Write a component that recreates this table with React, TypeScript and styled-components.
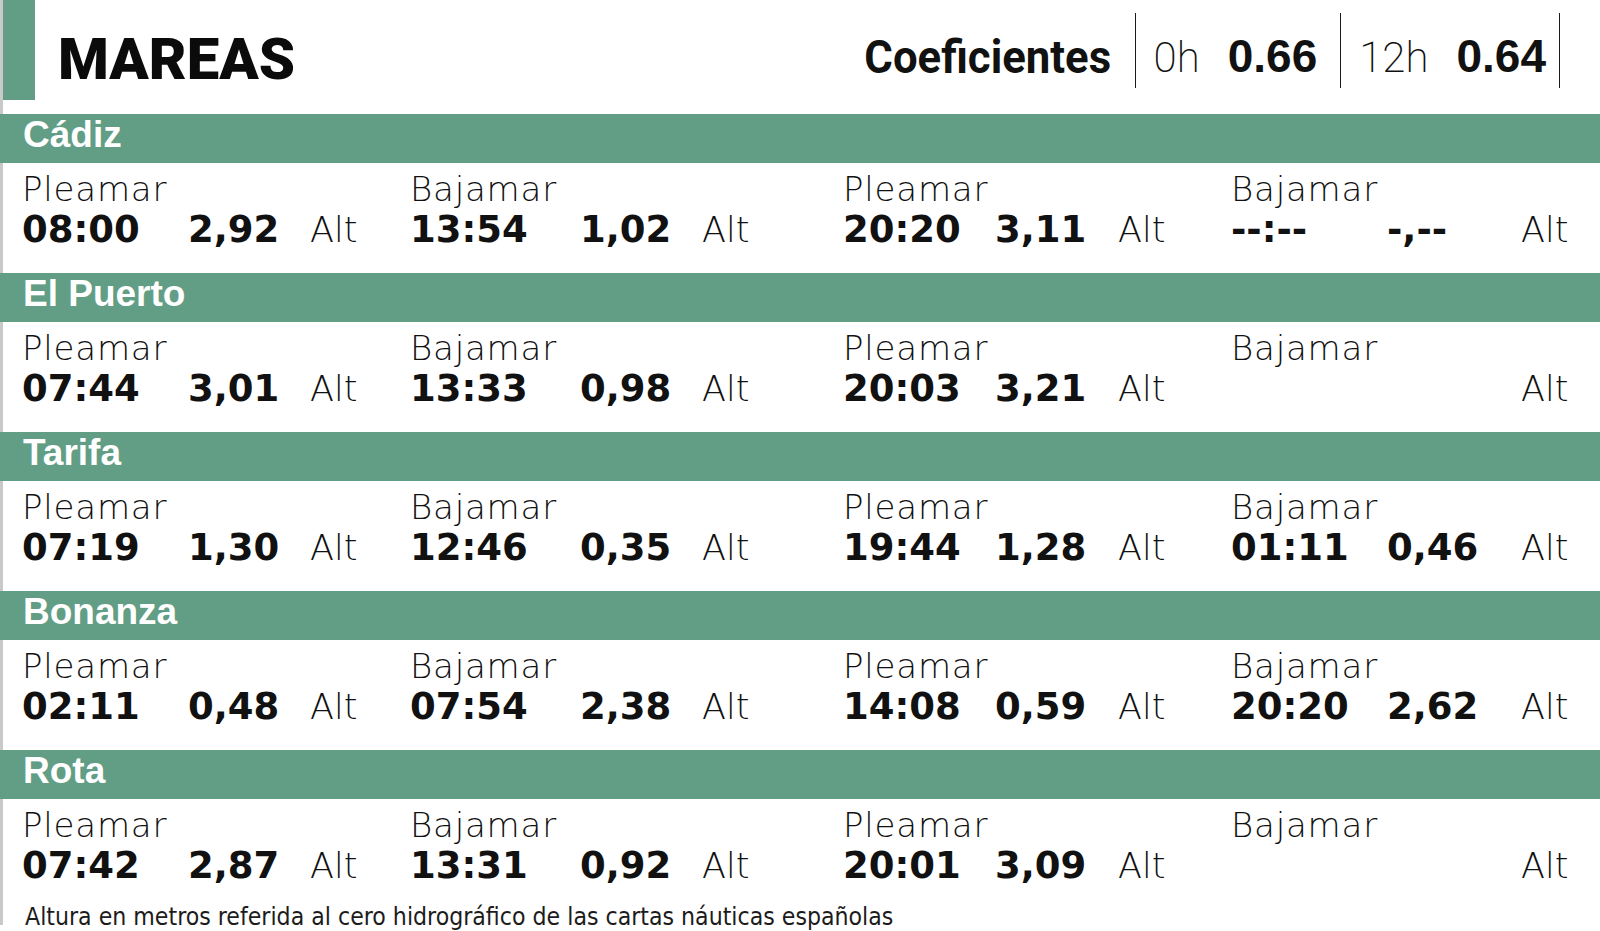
import React from 'react';
import styled, { createGlobalStyle } from 'styled-components';

const green = '#629e85';
const edge = '#c9c9c9';
const ink = '#111';

type Tide = { label: string; time: string; height: string };
type Station = { name: string; tides: Tide[] };

const stations: Station[] = [
    {
        name: 'Cádiz',
        tides: [
            { label: 'Pleamar', time: '08:00', height: '2,92' },
            { label: 'Bajamar', time: '13:54', height: '1,02' },
            { label: 'Pleamar', time: '20:20', height: '3,11' },
            { label: 'Bajamar', time: '--:--', height: '-,--' },
        ],
    },
    {
        name: 'El Puerto',
        tides: [
            { label: 'Pleamar', time: '07:44', height: '3,01' },
            { label: 'Bajamar', time: '13:33', height: '0,98' },
            { label: 'Pleamar', time: '20:03', height: '3,21' },
            { label: 'Bajamar', time: '', height: '' },
        ],
    },
    {
        name: 'Tarifa',
        tides: [
            { label: 'Pleamar', time: '07:19', height: '1,30' },
            { label: 'Bajamar', time: '12:46', height: '0,35' },
            { label: 'Pleamar', time: '19:44', height: '1,28' },
            { label: 'Bajamar', time: '01:11', height: '0,46' },
        ],
    },
    {
        name: 'Bonanza',
        tides: [
            { label: 'Pleamar', time: '02:11', height: '0,48' },
            { label: 'Bajamar', time: '07:54', height: '2,38' },
            { label: 'Pleamar', time: '14:08', height: '0,59' },
            { label: 'Bajamar', time: '20:20', height: '2,62' },
        ],
    },
    {
        name: 'Rota',
        tides: [
            { label: 'Pleamar', time: '07:42', height: '2,87' },
            { label: 'Bajamar', time: '13:31', height: '0,92' },
            { label: 'Pleamar', time: '20:01', height: '3,09' },
            { label: 'Bajamar', time: '', height: '' },
        ],
    },
];

// column widths inside each of the four tide groups: time | height | Alt
const groupCols = ['166px 122px auto', '170px 122px auto', '152px 123px auto', '156px 134px auto'];

export default function App() {
    return (
        <Page>
            <GlobalStyle />
            <Header>
                <Mark />
                <Title>MAREAS</Title>
                <Coef>
                    <CoefTitle>Coeficientes</CoefTitle>
                    <CoefCell>
                        <Hour>0h</Hour>
                        <CoefValue>0.66</CoefValue>
                    </CoefCell>
                    <CoefCell $last>
                        <Hour>12h</Hour>
                        <CoefValue>0.64</CoefValue>
                    </CoefCell>
                </Coef>
            </Header>
            {stations.map((s) => (
                <section key={s.name}>
                    <Bar>{s.name}</Bar>
                    <Row>
                        {s.tides.map((t, i) => (
                            <Group key={i}>
                                <Label>{t.label}</Label>
                                <Line $cols={groupCols[i]}>
                                    <Num>{t.time || '\u00a0'}</Num>
                                    <Num>{t.height}</Num>
                                    <Alt>Alt</Alt>
                                </Line>
                            </Group>
                        ))}
                    </Row>
                </section>
            ))}
            <Footer>Altura en metros referida al cero hidrográfico de las cartas náuticas españolas</Footer>
        </Page>
    );
}

const GlobalStyle = createGlobalStyle`
    html, body {
        margin: 0;
        padding: 0;
        background: #fff;
    }
    body {
        font-family: 'DejaVu Sans', sans-serif;
        color: ${ink};
    }
`;

const Page = styled.div`
    width: 1600px;
    height: 931px;
    overflow: hidden;
    background: #fff;
`;

const Header = styled.header`
    display: flex;
    align-items: flex-start;
    height: 114px;
    box-sizing: border-box;
    border-left: 3px solid ${edge};
`;

const Mark = styled.div`
    width: 32px;
    height: 100px;
    flex-shrink: 0;
    background: ${green};
`;

const Title = styled.h1`
    margin: 30px 0 0 23px;
    font: 900 58px/1 Roboto, 'Liberation Sans', sans-serif;
    color: #0b0b0b;
`;

const Coef = styled.div`
    display: flex;
    height: 75px;
    margin: 13px 40px 0 auto;
`;

/* the printed face is a condensed bold; squeeze Roboto a little to match */
const CoefTitle = styled.span`
    display: inline-block;
    padding: 20px 25px 0 0;
    font: 700 47px/1 Roboto, sans-serif;
    transform: scaleX(0.93);
    transform-origin: right center;
`;

const CoefCell = styled.div<{ $last?: boolean }>`
    display: flex;
    align-items: baseline;
    gap: 28px;
    padding: 20px ${(p) => (p.$last ? '13px' : '23px')} 0 18px;
    border-left: 1px solid #1a1a1a;
    border-right: ${(p) => (p.$last ? '1px solid #1a1a1a' : 'none')};
`;

const Hour = styled.span`
    font: 200 42px/1 Roboto, sans-serif;
`;

const CoefValue = styled.span`
    font: 700 46px/1 'Liberation Sans', sans-serif;
`;

const Bar = styled.div`
    height: 49px;
    box-sizing: border-box;
    padding-left: 23px;
    background: ${green};
    color: #fff;
    font: 700 37px/41px 'Liberation Sans', sans-serif;
`;

const Row = styled.div`
    display: grid;
    grid-template-columns: 388px 433px 388px 1fr;
    height: 110px;
    box-sizing: border-box;
    padding: 9px 0 0 19px;
    border-left: 3px solid ${edge};
`;

const Group = styled.div`
    display: flex;
    flex-direction: column;
`;

const Label = styled.div`
    margin-bottom: 5px;
    font: 200 34px/1 'DejaVu Sans', sans-serif;
    letter-spacing: 0.8px;
`;

const Line = styled.div<{ $cols: string }>`
    display: grid;
    grid-template-columns: ${(p) => p.$cols};
    align-items: baseline;
`;

const Num = styled.span`
    font: 700 37px/1 'DejaVu Sans', sans-serif;
    white-space: nowrap;
`;

const Alt = styled.span`
    font: 200 35px/1 'DejaVu Sans', sans-serif;
`;

const Footer = styled.p`
    margin: 0;
    padding-left: 22px;
    border-left: 3px solid ${edge};
    font: 400 24.6px/16px 'DejaVu Sans Condensed', 'DejaVu Sans', sans-serif;
    color: #1c1c1c;
    white-space: nowrap;
`;
